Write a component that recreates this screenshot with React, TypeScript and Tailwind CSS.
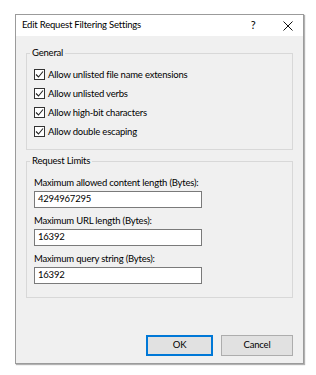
import React from 'react';

const font = { fontFamily: '"Lato", sans-serif' };

const checks = [
  'Allow unlisted file name extensions',
  'Allow unlisted verbs',
  'Allow high-bit characters',
  'Allow double escaping',
];

const limits = [
  { label: 'Maximum allowed content length (Bytes):', value: '4294967295' },
  { label: 'Maximum URL length (Bytes):', value: '16392' },
  { label: 'Maximum query string (Bytes):', value: '16392' },
];

const CheckBox = () => (
  <span className="w-[11px] h-[11px] border border-[#333] bg-white flex items-center justify-center shrink-0">
    <svg width="9" height="9" viewBox="0 0 9 9" fill="none">
      <path d="M1 4.5 L3.5 7 L8 1.5" stroke="#222" strokeWidth="1.1" />
    </svg>
  </span>
);

export default function App() {
  return (
    <div className="min-h-[375px] bg-white pt-[14px] pl-[15px] text-[9.5px] tracking-[-0.2px] text-black" style={font}>
      <div className="w-[289px] h-[350px] flex flex-col border border-[#9b9b9b] bg-[#f0f0f0] shadow-[1px_1px_1px_rgba(0,0,0,0.3)]">
        {/* Title bar */}
        <div className="h-[21px] bg-white flex items-center pl-[6px] shrink-0">
          <span className="flex-1 text-[9.5px]">Edit Request Filtering Settings</span>
          <span className="w-[10px] text-center text-[11px] mr-[25px]">?</span>
          <svg width="10" height="10" viewBox="0 0 10 10" className="mr-[10px]">
            <path d="M0.5 0.5 L9.5 9.5 M9.5 0.5 L0.5 9.5" stroke="#111" strokeWidth="1" />
          </svg>
        </div>

        {/* Body */}
        <div className="flex-1 flex flex-col px-[10px] pt-[10px] pb-[7px]">
          <fieldset className="border border-[#d8d8d8] pb-[8px]">
            <legend className="ml-[3px] px-[2px] leading-[14px]">General</legend>
            <div className="pt-[5px] pl-[7px] flex flex-col">
              {checks.map(c => (
                <label key={c} className="h-[19px] flex items-center gap-[3px]">
                  <CheckBox />
                  <span className="leading-[14px]">{c}</span>
                </label>
              ))}
            </div>
          </fieldset>

          <fieldset className="mt-[4px] border border-[#d8d8d8] pb-[13px]">
            <legend className="ml-[3px] px-[2px] leading-[14px]">Request Limits</legend>
            <div className="pt-[8px] pl-[7px] flex flex-col">
              {limits.map((l, i) => (
                <div key={l.label} className={i > 0 ? 'mt-[6px]' : ''}>
                  <div className="h-[14px] leading-[14px]">{l.label}</div>
                  <div className="mt-[1px] w-[168px] h-[17px] border border-[#7a7a7a] bg-white flex items-center pl-[3px]">
                    {l.value}
                  </div>
                </div>
              ))}
            </div>
          </fieldset>

          <div className="flex-1" />

          <div className="flex justify-end gap-[8px]">
            <button className="w-[67px] h-[21px] bg-[#e1e1e1] border-2 border-[#0078d7] flex items-center justify-center">
              OK
            </button>
            <button className="w-[72px] h-[21px] bg-[#e1e1e1] border border-[#adadad] flex items-center justify-center">
              Cancel
            </button>
          </div>
        </div>
      </div>
    </div>
  );
}
